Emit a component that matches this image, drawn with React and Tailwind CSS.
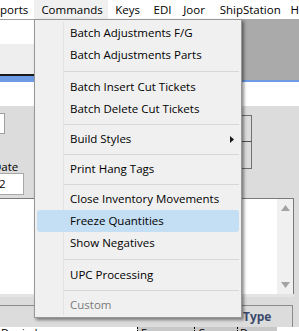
import React from "react";

const font = { fontFamily: '"Open Sans", "Noto Sans", sans-serif' };

const items = [
  { label: "Batch Adjustments F/G" },
  { label: "Batch Adjustments Parts" },
  { sep: "h-[10px]" },
  { label: "Batch Insert Cut Tickets" },
  { label: "Batch Delete Cut Tickets" },
  { sep: "h-[8px]" },
  { label: "Build Styles", sub: true },
  { sep: "h-[8px]" },
  { label: "Print Hang Tags" },
  { sep: "h-[8px]" },
  { label: "Close Inventory Movements" },
  { label: "Freeze Quantities", active: true },
  { label: "Show Negatives" },
  { sep: "h-[10px]" },
  { label: "UPC Processing" },
  { sep: "h-[8px]" },
  { label: "Custom", disabled: true },
];

const CommandsMenu = () => {
  return (
    <div className="absolute left-[34px] top-[19px] w-[208px] bg-[#f0f0f0] border border-[#979797] px-[2px] pt-[2px] pb-px shadow-[2px_2px_3px_rgba(0,0,0,0.45)]">
      <div className="absolute left-[28px] top-[2px] bottom-[2px] w-px bg-[#e2e2e2]" />
      {items.map((it, i) =>
        it.sep ? (
          <div key={i} className={it.sep + " flex items-center pl-[26px]"}>
            <div className="h-px w-full bg-[#d7d7d7]" />
          </div>
        ) : (
          <div
            key={i}
            className={
              "relative h-[22px] flex items-center justify-between pl-[33px] pr-[5px] text-[11.5px] rounded-[3px] " +
              (it.active ? "bg-[#c4def4] " : "") +
              (it.disabled ? "text-[#7a7a7a]" : "text-black")
            }
          >
            <span>{it.label}</span>
            {it.sub && (
              <svg width="4" height="7" viewBox="0 0 4 7">
                <path d="M0 0L4 3.5L0 7z" fill="#1a1a1a" />
              </svg>
            )}
          </div>
        )
      )}
    </div>
  );
};

export default function App() {
  return (
    <div className="relative w-[299px] h-[331px] overflow-hidden bg-[#dcdcdc] text-black" style={font}>
      <div className="h-[19px] bg-white flex items-stretch text-[11.5px] whitespace-nowrap">
        <div className="w-[35px] flex items-center">ports</div>
        <div className="w-[75px] flex items-center pl-[7px] bg-[#f0f0f0]">Commands</div>
        <div className="w-[39px] flex items-center pl-[7px]">Keys</div>
        <div className="w-[30px] flex items-center pl-[7px]">EDI</div>
        <div className="w-[37px] flex items-center pl-[7px]">Joor</div>
        <div className="w-[72px] flex items-center pl-[7px]">ShipStation</div>
        <div className="flex items-center pl-[7px]">H</div>
      </div>

      <div className="flex h-[63px]">
        <div className="w-[150px] flex flex-col">
          <div className="h-px bg-[#a0a0a0]" />
          <div className="h-[24px] bg-white" />
          <div className="h-[30px] bg-[#eeeeee]" />
          <div className="h-[2px] bg-[#1a1a1a]" />
          <div className="h-[6px] bg-[#6d9be6]" />
        </div>
        <div className="flex-1 flex flex-col">
          <div className="h-[61px] bg-[#aaaaaa]" />
          <div className="h-[2px] bg-[#6d9be6]" />
        </div>
      </div>

      <div className="h-[24px] bg-white" />

      <div className="relative h-[92px] text-[11.5px]">
        <div className="absolute left-[-20px] top-[7px] w-[25px] h-[21px] bg-white border border-[#a0a0a0]" />
        <div className="absolute left-[-7px] top-[52px]">Date</div>
        <div className="absolute left-[-10px] top-[67px] w-[34px] h-[22px] bg-white border border-[#a8a8a8] flex items-center pl-[8px]">
          2
        </div>
        <div className="absolute left-[230px] top-[9px] w-[22px] flex flex-col">
          <div className="h-[27px] border border-[#707070] border-b-[#505050]" />
          <div className="h-[27px] border border-t-0 border-[#707070]" />
        </div>
      </div>

      <div className="flex h-[96px]">
        <div className="w-[294px] border-t border-r border-[#7a7a7a] bg-white flex">
          <div className="flex-1" />
          <div className="w-[16px] bg-[#f0f0f0] flex flex-col items-center justify-between py-[6px]">
            <svg width="9" height="6" viewBox="0 0 9 6">
              <path d="M4.5 0L9 6H0z" fill="#a3a3a3" />
            </svg>
            <svg width="9" height="6" viewBox="0 0 9 6">
              <path d="M0 0H9L4.5 6z" fill="#a3a3a3" />
            </svg>
          </div>
        </div>
      </div>
      <div className="h-[3px] bg-[#e4e4e4] w-[294px]" />
      <div className="h-[8px]" />

      <div className="flex h-[22px] w-[293px] border-t border-r border-[#8a8a8a]">
        <div className="w-[243px]" />
        <div className="flex items-center font-bold text-[12px] text-[#3b4a6c]">Type</div>
      </div>

      <div className="flex h-[6px] text-[11px] leading-[12px] whitespace-nowrap">
        <div className="w-[137px] bg-white pl-[1px]">Denied</div>
        <div className="w-[57px] bg-[#c8c8c8] border-l border-dotted border-black pl-[3px]">Expense</div>
        <div className="w-[43px] bg-[#c8c8c8] border-l border-dotted border-black pl-[3px]">Cur</div>
        <div className="w-[40px] bg-[#c8c8c8] border-l border-dotted border-black pl-[2px]">D</div>
        <div className="flex-1 bg-white" />
      </div>

      <CommandsMenu />
    </div>
  );
}
